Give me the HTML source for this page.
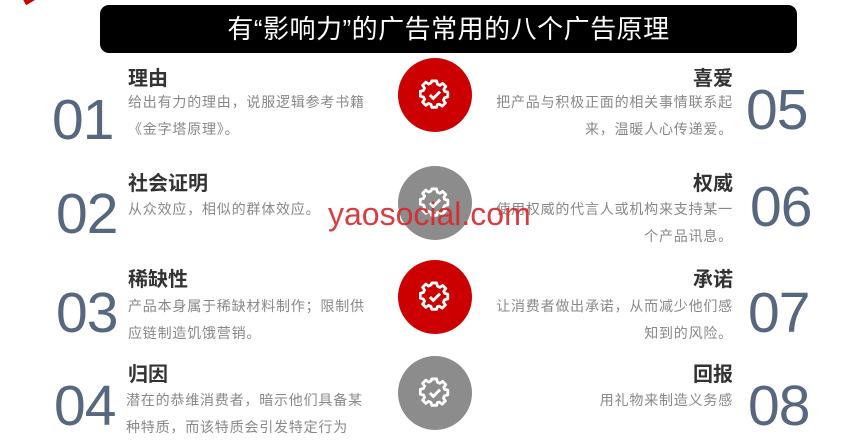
<!DOCTYPE html>
<html><head><meta charset="utf-8"><style>
*{margin:0;padding:0;box-sizing:border-box}
body{width:859px;height:442px;background:#fff;position:relative;overflow:hidden;font-family:"Liberation Sans","Noto Sans CJK SC",sans-serif}
.a{position:absolute;white-space:nowrap}
.bar{left:100px;top:5px;width:697px;height:48px;background:#000;border-radius:9px;color:#fff;font-size:26px;text-align:center;line-height:48px;letter-spacing:.5px}
.num{font-size:57px;color:#56677f;line-height:1;letter-spacing:-1px}
.t{font-size:20px;font-weight:bold;color:#333;line-height:24px}
.d{font-size:14px;color:#888;line-height:27px;letter-spacing:.8px}
.r{text-align:right}
.c{width:74px;height:74px;border-radius:50%;left:398px}
.red{background:#cc0000}.gray{background:#8c8c8c}
.c svg{position:absolute;left:21px;top:21px}
.wm{left:328px;top:196px;font-size:32px;color:#d8272d;opacity:.9}
</style></head><body>
<div class="a" style="left:24px;top:-3px;width:10px;height:6px;background:#c00;transform:rotate(-30deg)"></div>
<div class="a bar">有“影响力”的广告常用的八个广告原理</div>

<div class="a c red" style="top:58px"><svg width="32" height="32" viewBox="0 0 38 38"><path d="M16 4h6l1 4 3 1.5 3.5-2.5 4 4-2.5 3.5L32 17l4 1v6l-4 1-1.5 3 2.5 3.5-4 4-3.5-2.5L23 33.5 22 37h-6l-1-3.5-3-1.5-3.5 2.5-4-4L7 27l-1.5-3-4-1v-6l4-1L7 13 4.5 9.5l4-4L12 8l3-1.5z" fill="none" stroke="#fff" stroke-width="3.5" stroke-linejoin="round" transform="translate(0,-1.5) scale(.95)"/><path d="M13 19l4 4 8-8" fill="none" stroke="#fff" stroke-width="3.5"/></svg></div>
<div class="a c gray" style="top:166px"><svg width="32" height="32" viewBox="0 0 38 38"><path d="M16 4h6l1 4 3 1.5 3.5-2.5 4 4-2.5 3.5L32 17l4 1v6l-4 1-1.5 3 2.5 3.5-4 4-3.5-2.5L23 33.5 22 37h-6l-1-3.5-3-1.5-3.5 2.5-4-4L7 27l-1.5-3-4-1v-6l4-1L7 13 4.5 9.5l4-4L12 8l3-1.5z" fill="none" stroke="#fff" stroke-width="3.5" stroke-linejoin="round" transform="translate(0,-1.5) scale(.95)"/><path d="M13 19l4 4 8-8" fill="none" stroke="#fff" stroke-width="3.5"/></svg></div>
<div class="a c red" style="top:260px"><svg width="32" height="32" viewBox="0 0 38 38"><path d="M16 4h6l1 4 3 1.5 3.5-2.5 4 4-2.5 3.5L32 17l4 1v6l-4 1-1.5 3 2.5 3.5-4 4-3.5-2.5L23 33.5 22 37h-6l-1-3.5-3-1.5-3.5 2.5-4-4L7 27l-1.5-3-4-1v-6l4-1L7 13 4.5 9.5l4-4L12 8l3-1.5z" fill="none" stroke="#fff" stroke-width="3.5" stroke-linejoin="round" transform="translate(0,-1.5) scale(.95)"/><path d="M13 19l4 4 8-8" fill="none" stroke="#fff" stroke-width="3.5"/></svg></div>
<div class="a c gray" style="top:356px"><svg width="32" height="32" viewBox="0 0 38 38"><path d="M16 4h6l1 4 3 1.5 3.5-2.5 4 4-2.5 3.5L32 17l4 1v6l-4 1-1.5 3 2.5 3.5-4 4-3.5-2.5L23 33.5 22 37h-6l-1-3.5-3-1.5-3.5 2.5-4-4L7 27l-1.5-3-4-1v-6l4-1L7 13 4.5 9.5l4-4L12 8l3-1.5z" fill="none" stroke="#fff" stroke-width="3.5" stroke-linejoin="round" transform="translate(0,-1.5) scale(.95)"/><path d="M13 19l4 4 8-8" fill="none" stroke="#fff" stroke-width="3.5"/></svg></div>

<div class="a num" style="left:52px;top:92px">01</div>
<div class="a t" style="left:128px;top:67px">理由</div>
<div class="a d" style="left:128px;top:89px">给出有力的理由，说服逻辑参考书籍<br>《金字塔原理》。</div>

<div class="a num" style="left:56px;top:186px">02</div>
<div class="a t" style="left:128px;top:172px">社会证明</div>
<div class="a d" style="left:128px;top:196px">从众效应，相似的群体效应。</div>

<div class="a num" style="left:56px;top:285px">03</div>
<div class="a t" style="left:128px;top:268px">稀缺性</div>
<div class="a d" style="left:128px;top:293px">产品本身属于稀缺材料制作；限制供<br>应链制造饥饿营销。</div>

<div class="a num" style="left:54px;top:378px">04</div>
<div class="a t" style="left:128px;top:363px">归因</div>
<div class="a d" style="left:126px;top:387px">潜在的恭维消费者，暗示他们具备某<br>种特质，而该特质会引发特定行为</div>

<div class="a num" style="left:746px;top:82px">05</div>
<div class="a t r" style="right:126px;top:67px">喜爱</div>
<div class="a d r" style="right:126px;top:89px">把产品与积极正面的相关事情联系起<br>来，温暖人心传递爱。</div>

<div class="a num" style="left:750px;top:179px">06</div>
<div class="a t r" style="right:126px;top:172px">权威</div>
<div class="a d r" style="right:126px;top:196px">使用权威的代言人或机构来支持某一<br>个产品讯息。</div>

<div class="a num" style="left:748px;top:285px">07</div>
<div class="a t r" style="right:126px;top:268px">承诺</div>
<div class="a d r" style="right:126px;top:293px">让消费者做出承诺，从而减少他们感<br>知到的风险。</div>

<div class="a num" style="left:748px;top:378px">08</div>
<div class="a t r" style="right:126px;top:363px">回报</div>
<div class="a d r" style="right:126px;top:387px">用礼物来制造义务感</div>

<div class="a wm">yaosocial.com</div>
</body></html>
